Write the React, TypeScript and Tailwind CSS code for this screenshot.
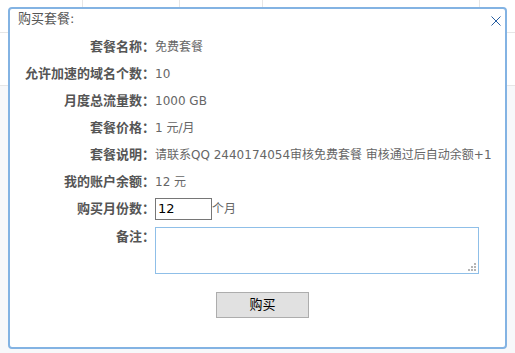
import React from "react";

const rows: { label: string; value: string }[] = [
  { label: "套餐名称：", value: "免费套餐" },
  { label: "允许加速的域名个数：", value: "10" },
  { label: "月度总流量数：", value: "1000 GB" },
  { label: "套餐价格：", value: "1 元/月" },
  { label: "套餐说明：", value: "请联系QQ 2440174054审核免费套餐 审核通过后自动余额+1" },
  { label: "我的账户余额：", value: "12 元" },
];

export default function App() {
  return (
    <div className="relative w-[515px] h-[353px] overflow-hidden bg-white font-['DejaVu_Sans','Noto_Sans_CJK_SC',sans-serif]">
      {/* page behind the dialog */}
      <div className="flex flex-col h-full">
        <div className="flex h-[33px] border-b border-[#e6e6e6]">
          <div className="w-[83px] border-r border-[#e6e6e6]" />
          <div className="w-[97px] border-r border-[#e6e6e6]" />
          <div className="w-[83px] border-r border-[#e6e6e6]" />
          <div className="w-[217px] border-r border-[#e6e6e6]" />
          <div className="flex-1" />
        </div>
        <div className="h-[53px] border-b border-[#e6e6e6]" />
        <div className="flex-1 bg-[#f7f8fa]" />
      </div>

      {/* dialog */}
      <div className="absolute left-[8px] top-[7px] w-[499px] h-[342px] border-2 border-[#83b3e3] rounded-[4px] bg-white">
        <div className="flex h-[24px] pl-[8px] pr-[4px] leading-[20px] text-[13px] text-[#555]">
          <span className="flex-1">购买套餐:</span>
          <button className="mt-[7px] w-[10px] h-[10px] text-[#0f4c96]">
            <svg width="10" height="10" viewBox="0 0 10 10" fill="none" stroke="currentColor" strokeWidth="0.9">
              <path d="M0.5 0.5 L9.5 9.5 M9.5 0.5 L0.5 9.5" />
            </svg>
          </button>
        </div>

        <div className="flex flex-col">
          {rows.map((r) => (
            <div key={r.label} className="flex items-center h-[27px]">
              <div className="w-[145px] shrink-0 text-right text-[13px] font-bold text-[#555]">{r.label}</div>
              <div className="text-[12px] text-[#666] whitespace-nowrap">{r.value}</div>
            </div>
          ))}
          <div className="flex items-center h-[27px]">
            <div className="w-[145px] shrink-0 text-right text-[13px] font-bold text-[#555]">购买月份数：</div>
            <input
              defaultValue="12"
              className="w-[57px] h-[22px] border border-[#767676] px-[2px] text-[13px] text-black outline-none"
            />
            <span className="text-[12px] text-[#666]">个月</span>
          </div>
          <div className="flex items-start mt-[5px]">
            <div className="w-[145px] shrink-0 text-right text-[13px] font-bold leading-[20px] text-[#555]">备注：</div>
            <div className="relative">
              <textarea className="w-[324px] h-[47px] border border-[#8fbfe8] outline-none text-[12px] block resize-none" />
              <svg className="absolute right-[3px] bottom-[3px]" width="8" height="8" viewBox="0 0 8 8" fill="#b5b5b5">
                <rect x="6" y="0" width="2" height="2" />
                <rect x="3" y="3" width="2" height="2" />
                <rect x="6" y="3" width="2" height="2" />
                <rect x="0" y="6" width="2" height="2" />
                <rect x="3" y="6" width="2" height="2" />
                <rect x="6" y="6" width="2" height="2" />
              </svg>
            </div>
          </div>
          <div className="flex pl-[206px] mt-[18px]">
            <button className="w-[93px] h-[26px] bg-[#e1e1e1] border border-[#adadad] text-[13px] text-black">
              购买
            </button>
          </div>
        </div>
      </div>
    </div>
  );
}
